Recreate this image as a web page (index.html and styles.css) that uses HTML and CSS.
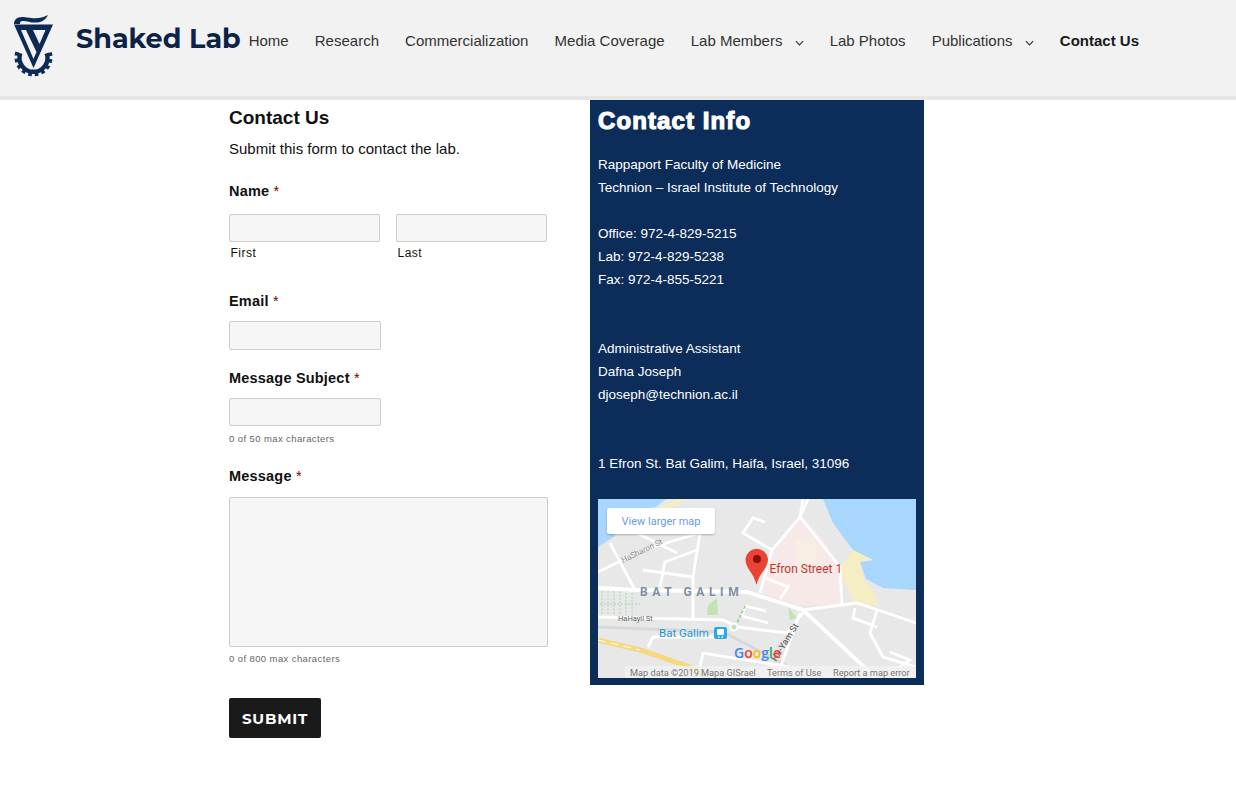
FILE: index.html
```html
<!DOCTYPE html>
<html lang="en">

<head>
    <meta charset="UTF-8">
    <meta name="viewport" content="width=device-width, initial-scale=1.0">
    <title>Contact Us - Shaked Lab</title>
    <link rel="stylesheet" href="styles.css">
</head>

<body>
    <header class="site-header">
        <a class="brand" href="#">
            <svg class="brand-logo" viewBox="0 0 40 64" width="40" height="64">
                <!-- gear -->
                <g fill="none" stroke="#0c2a55">
                    <path d="M6.300 39.200 A14 14 0 1 0 32.700 39.200" stroke-width="4.500"/>
                    <path d="M3.300 38.200 A17 17 0 1 0 35.700 38.200" stroke-width="4" stroke-dasharray="3.600 3"/>
                </g>
                <!-- letters -->
                <path d="M0 9 C1 4 4 3 10 3 C18 4 25 6 34 1 C32 5 29 8 23 8.500 C17 9 12 6.500 8 7 C6 7.500 6 9 6 10 H0 Z" fill="#0c2a55"/>
                <path d="M0 10.500 H39 L19.500 54 Z M7 16 L19.500 45 L22.500 38 L12 16 Z M19 16 L25.500 30 L31.500 16 Z" fill="#0c2a55" fill-rule="evenodd"/>
            </svg>
            <span class="brand-name">Shaked Lab</span>
        </a>
        <nav class="main-nav">
            <a href="#">Home</a>
            <a href="#">Research</a>
            <a href="#">Commercialization</a>
            <a href="#">Media Coverage</a>
            <a href="#" class="has-sub">Lab Members
                <svg viewBox="0 0 10 6" width="9" height="6"><path d="M1 1 L5 5 L9 1" fill="none" stroke="#333" stroke-width="1.300"/></svg>
            </a>
            <a href="#">Lab Photos</a>
            <a href="#" class="has-sub">Publications
                <svg viewBox="0 0 10 6" width="9" height="6"><path d="M1 1 L5 5 L9 1" fill="none" stroke="#333" stroke-width="1.300"/></svg>
            </a>
            <a href="#" class="current">Contact Us</a>
        </nav>
    </header>

    <main class="content">
        <!-- Contact form -->
        <section class="form-col">
            <h2>Contact Us</h2>
            <p class="intro">Submit this form to contact the lab.</p>
            <form>
                <div class="field field-name">
                    <label class="field-label">Name <span class="req">*</span></label>
                    <div class="name-row">
                        <div class="name-part">
                            <input type="text" id="first">
                            <label for="first">First</label>
                        </div>
                        <div class="name-part">
                            <input type="text" id="last">
                            <label for="last">Last</label>
                        </div>
                    </div>
                </div>
                <div class="field field-email">
                    <label class="field-label" for="email">Email <span class="req">*</span></label>
                    <input type="text" id="email" class="input-small">
                </div>
                <div class="field field-subject">
                    <label class="field-label" for="subject">Message Subject <span class="req">*</span></label>
                    <input type="text" id="subject" class="input-small">
                    <div class="counter">0 of 50 max characters</div>
                </div>
                <div class="field field-message">
                    <label class="field-label" for="message">Message <span class="req">*</span></label>
                    <textarea id="message"></textarea>
                    <div class="counter">0 of 800 max characters</div>
                </div>
                <button type="submit">Submit</button>
            </form>
        </section>

        <!-- Contact info -->
        <aside class="info-col">
            <h2>Contact Info</h2>
            <p>Rappaport Faculty of Medicine<br>Technion – Israel Institute of Technology</p>
            <p>Office: 972-4-829-5215<br>Lab: 972-4-829-5238<br>Fax: 972-4-855-5221</p>
            <p class="gap">Administrative Assistant<br>Dafna Joseph<br>djoseph@technion.ac.il</p>
            <p class="gap">1 Efron St. Bat Galim, Haifa, Israel, 31096</p>
            <div class="map">
                <svg viewBox="0 0 318 179" width="318" height="179">
                    <rect width="318" height="179" fill="#e8e8e8"/>
                    <!-- water -->
                    <path d="M225 0 H318 V91 L285 89 L268 80 L262 63 L275 61 L255 51 L235 24 Z" fill="#a8d6fc"/>
                    <path d="M0 0 H68 L58 8 L30 12 L17 37 L0 48 Z" fill="#a8d6fc"/>
                    <!-- technion campus -->
                    <path d="M205 18 L172 51 L165 78 L162 94 L199 106 L242 106 L242 68 L225 40 Z" fill="#f6e9e7"/>
                    <path d="M198 41 L217 43 L219 60 L210 78 L198 74 Z" fill="#f7eee4"/>
                    <!-- beach -->
                    <path d="M255 51 L275 61 L262 63 L266 80 L279 98 L279 106 L258 106 L242 75 L245 65 Z" fill="#f5edc4"/>
                    <path d="M62 8 L80 0 H90 L70 10 Z" fill="#f5edc4"/>
                    <!-- parks -->
                    <path d="M110 106 L119 99 L120 116 L109 116 Z" fill="#c4e3b4"/>
                    <path d="M190 108 L199 119 L192 121 Z" fill="#c4e3b4"/>
                    <g fill="none" stroke="#a8d8a8" stroke-width="1" stroke-dasharray="2 1.500">
                        <path d="M4 92 V116"/>
                        <path d="M10 92 V116"/>
                        <path d="M16 92 V116"/>
                        <path d="M22 92 V116"/>
                        <path d="M28 94 V116"/>
                        <path d="M34 94 V116"/>
                        <path d="M2 105 H42"/>
                    </g>
                    <!-- rail -->
                    <path d="M0 128 L125 133 L192 168" fill="none" stroke="#d6d9dc" stroke-width="3"/>
                    <!-- motorway -->
                    <path d="M0 141 L42 151 L92 168 L110 179" fill="none" stroke="#f5d97e" stroke-width="5"/>
                    <path d="M0 141 L42 151" fill="none" stroke="#fff" stroke-width="1" stroke-dasharray="8 5"/>
                    <!-- streets -->
                    <g fill="none" stroke="#fff" stroke-width="2.800">
                        <path d="M0 89 L39 91 L149 93 L205 111 L278 179" stroke-width="3.800"/>
                        <path d="M205 111 L259 104 L318 124"/>
                        <path d="M12 44 L37 91"/>
                        <path d="M0 73 L45 51 L102 34 L95 78 L95 121"/>
                        <path d="M45 71 L95 78"/>
                        <path d="M62 88 L67 63 L99 51"/>
                        <path d="M39 34 L79 54"/>
                        <path d="M0 118 L125 121 L139 128 L189 134 L205 114"/>
                        <path d="M50 148 L55 138 L125 138"/>
                        <path d="M102 168 L105 154 L192 168"/>
                        <path d="M202 114 L179 178"/>
                        <path d="M162 94 L174 51 L202 18 L242 68 L244 106"/>
                        <path d="M174 51 L145 34 L155 19 L167 23"/>
                        <path d="M147 107 L168 112"/>
                        <path d="M147 107 L144 117 L170 124"/>
                        <path d="M257 109 L255 119 L279 128"/>
                        <path d="M279 111 L272 134 L285 158 L318 168"/>
                        <path d="M292 153 L312 161 L302 168"/>
                        <path d="M202 18 L205 0 M210 0 L202 18"/>
                        <path d="M165 78 L190 88 L182 100"/>
                    </g>
                    <path d="M147 107 L139 124" fill="none" stroke="#7fca7f" stroke-width="1.500" stroke-dasharray="3 2"/>
                    <circle cx="136" cy="128" r="3.500" fill="#c4e3b4" stroke="#fff" stroke-width="2"/>
                    <!-- marker -->
                    <path d="M158.500 86 C155.500 73 147.500 70 147.500 60 A11.300 11.300 0 0 1 170 60 C170 70 161.500 73 158.500 86 Z" fill="#ea4335"/>
                    <circle cx="159" cy="60" r="4" fill="#8a1006"/>
                    <!-- labels -->
                    <text class="map-road" x="25" y="64" transform="rotate(-26 25 64)">HaSharon St</text>
                    <text class="map-road map-road-plain" x="20" y="122">HaHayil St</text>
                    <text class="map-road map-road-dark" x="178" y="163" transform="rotate(-58 178 163)">Ha-Yam St</text>
                    <text class="map-area" x="42" y="97">BAT GALIM</text>
                    <text class="map-place" x="171.500" y="74">Efron Street 1</text>
                    <text class="map-station" x="61" y="138">Bat Galim</text>
                    <rect x="116" y="128" width="13" height="12" rx="2" fill="#29a9e6"/>
                    <rect x="119" y="130" width="7" height="6" rx="1" fill="#fff"/>
                    <path d="M120 138 H121.500 M123.500 138 H125" stroke="#fff" stroke-width="1.500"/>
                    <text class="map-google" x="136" y="159"><tspan fill="#4285f4">G</tspan><tspan fill="#ea4335">o</tspan><tspan fill="#fbbc05">o</tspan><tspan fill="#4285f4">g</tspan><tspan fill="#34a853">l</tspan><tspan fill="#ea4335">e</tspan></text>
                    <!-- attribution -->
                    <rect x="27" y="167" width="291" height="12" fill="#f1f1f1" opacity="0.8"/>
                    <text class="map-attr" x="32" y="177">Map data ©2019 Mapa GISrael</text>
                    <text class="map-attr" x="169" y="177">Terms of Use</text>
                    <text class="map-attr" x="235" y="177">Report a map error</text>
                </svg>
                <a class="map-link" href="#">View larger map</a>
            </div>
        </aside>
    </main>
</body>

</html>
```
FILE: styles.css
```css
/* Page base */
* {
    box-sizing: border-box;
}

body {
    margin: 0;
    font-family: "Liberation Sans", Arial, sans-serif;
    font-size: 14px;
    color: #222;
    background-color: #fff;
}

a {
    text-decoration: none;
    color: inherit;
}

/* Header */
.site-header {
    display: flex;
    align-items: flex-start;
    height: 100px;
    padding: 14px 0 0 14px;
    background-color: #f2f2f2;
    border-bottom: 4px solid #e6e6e6;
}

.brand {
    display: flex;
    align-items: flex-start;
}

.brand-logo {
    display: block;
}

.brand-name {
    margin: 7px 0 0 22px;
    font-family: Montserrat, "Noto Sans", sans-serif;
    font-size: 27px;
    font-weight: 700;
    line-height: 36px;
    color: #0c2348;
}

.main-nav {
    display: flex;
    gap: 26.100px;
    margin: 18px 0 0 8px;
    font-size: 15px;
    line-height: 18px;
    color: #333;
}

.has-sub svg {
    margin-left: 8px;
}

.current {
    font-weight: 700;
    color: #1a1a1a;
}

/* Main layout */
.content {
    display: flex;
    align-items: flex-start;
    padding-left: 229px;
}

/* Form column */
.form-col {
    width: 361px;
    color: #111;
}

.form-col h2 {
    margin: 6px 0 0;
    font-size: 19px;
    line-height: 24px;
    font-weight: 700;
}

.intro {
    margin: 10px 0 0;
    font-size: 15px;
    line-height: 18px;
}

.field-label {
    display: block;
    font-size: 14.500px;
    line-height: 18px;
    font-weight: 700;
    letter-spacing: 0.200px;
}

.req {
    font-weight: 400;
    color: #790000;
}

input,
textarea {
    display: block;
    padding: 0;
    background-color: #f6f6f6;
    border: 1px solid #ccc;
    border-radius: 2px;
}

.field-name {
    margin-top: 24px;
}

.name-row {
    display: flex;
    gap: 16px;
    width: 318px;
    margin-top: 14px;
}

.name-part {
    flex: 1;
}

.name-part input {
    width: 151px;
    height: 28px;
}

.name-part label {
    display: block;
    margin: 4px 0 0 1.500px;
    font-size: 12px;
    line-height: 15px;
    letter-spacing: 0.500px;
}

.input-small {
    width: 152px;
    height: 29px;
    margin-top: 11px;
}

.field-email {
    margin-top: 31px;
}

.field-subject {
    margin-top: 19px;
}

.field-subject .input-small {
    height: 28px;
}

.counter {
    margin-top: 7px;
    font-size: 9.500px;
    line-height: 12px;
    letter-spacing: 0.400px;
    color: #666;
}

.field-message {
    margin-top: 22px;
}

textarea {
    width: 319px;
    height: 150px;
    margin-top: 12px;
    resize: none;
}

.field-message .counter {
    margin-top: 6px;
}

button {
    display: block;
    width: 92px;
    height: 40px;
    margin-top: 33px;
    padding: 0;
    font-family: Montserrat, "Noto Sans", sans-serif;
    font-size: 15px;
    font-weight: 700;
    letter-spacing: 0.800px;
    text-transform: uppercase;
    color: #fff;
    background-color: #1a1a1a;
    border: none;
    border-radius: 2px;
}

/* Info column */
.info-col {
    width: 334px;
    height: 585px;
    padding: 0 8px;
    color: #fff;
    background-color: #0c2c5a;
}

.info-col h2 {
    margin: 5px 0 0;
    font-size: 24px;
    line-height: 32px;
    font-weight: 700;
    -webkit-text-stroke: 1.200px #fff;
    letter-spacing: 1.100px;
}

.info-col p {
    margin: 23px 0 0;
    font-size: 13.500px;
    line-height: 23px;
}

.info-col h2 + p {
    margin-top: 16px;
}

.info-col p.gap {
    margin-top: 46px;
}

.map {
    position: relative;
    width: 318px;
    height: 179px;
    margin-top: 24px;
}

.map svg {
    display: block;
}

.map-link {
    position: absolute;
    top: 9px;
    left: 9px;
    width: 108px;
    height: 26px;
    font-family: Roboto, sans-serif;
    font-size: 11px;
    line-height: 27px;
    text-align: center;
    color: #6f9ce0;
    background-color: #fff;
    border-radius: 2px;
    box-shadow: 0 1px 2px rgba(0, 0, 0, 0.25);
}

/* Map labels */
.map text {
    font-family: Roboto, sans-serif;
}

.map .map-road {
    font-size: 8px;
    fill: #888;
}

.map .map-road-plain {
    font-size: 7.500px;
    fill: #666;
}

.map .map-road-dark {
    font-weight: 500;
    font-size: 9px;
    fill: #666;
}

.map .map-area {
    font-size: 12px;
    font-weight: 700;
    letter-spacing: 4.600px;
    fill: #7f8ea5;
}

.map .map-place {
    font-size: 12px;
    fill: #c5352b;
}

.map .map-station {
    font-size: 11.500px;
    fill: #1f9ad6;
}

.map .map-google {
    font-family: "Open Sans", sans-serif;
    font-size: 14px;
    font-weight: 600;
}

.map .map-attr {
    font-size: 9.200px;
    fill: #777;
}
```
